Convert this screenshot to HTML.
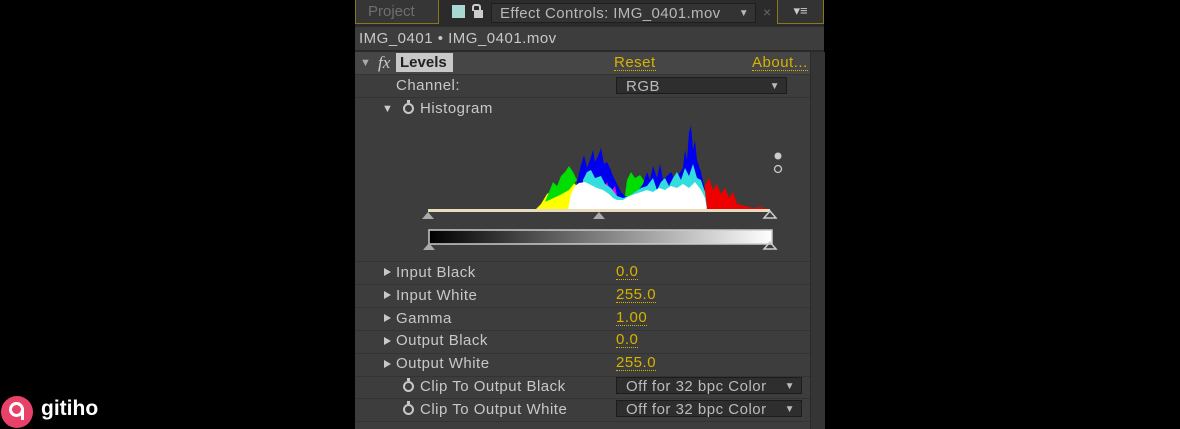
<!DOCTYPE html>
<html><head><style>
body{margin:0;width:1180px;height:429px;background:#000;position:relative;overflow:hidden;font-family:"Liberation Sans",sans-serif}
.p{position:absolute;left:355px;top:0;width:469px;height:429px;background:#3d3d3d}
.a{position:absolute;white-space:nowrap}
.t{color:#c8c8c8;font-size:15px;letter-spacing:.5px}
.y{color:#d8b200;font-size:15px;letter-spacing:.5px;border-bottom:1px dotted #d8b200;line-height:15px}
.row{position:absolute;left:0;width:455px;height:22px;border-bottom:1px solid #333}
.tri{position:absolute;width:0;height:0;border-top:4px solid transparent;border-bottom:4px solid transparent;border-left:7px solid #c8c8c8}
.dd{position:absolute;background:#2e2e2e;border:1px solid #1c1c1c;height:17px;color:#bbb;font-size:15px;letter-spacing:.5px;line-height:17px;padding-left:9px;box-sizing:border-box}
.sw{position:absolute;width:11px;height:11px;border:2px solid #c8c8c8;border-radius:50%;box-sizing:border-box}
.sw:before{content:"";position:absolute;left:2px;top:-5px;width:3px;height:3px;background:#c8c8c8}
</style></head><body>
<div class="p">
 <div class="a" style="left:0;top:0;width:469px;height:27px;background:#2b2b2b"></div>
 <div class="a" style="left:0;top:0;width:84px;height:24px;background:#363636;border:1px solid #8a7620;border-top:none;color:#6e6e6e;font-size:15px;line-height:24px;padding-left:12px;box-sizing:border-box">Project</div>
 <div class="a" style="left:97px;top:5px;width:13px;height:13px;background:#a8d8d2"></div>
 <div class="a" style="left:117px;top:4px;width:5px;height:5px;border:2px solid #ccc;border-bottom:none;border-radius:3px 3px 0 0"></div>
 <div class="a" style="left:119px;top:10px;width:9px;height:8px;background:#ccc"></div>
 <div class="a" style="left:136px;top:3px;width:265px;height:20px;background:#333;border:1px solid #1e1e1e;color:#b8b8b8;font-size:15px;letter-spacing:.4px;line-height:20px;padding-left:8px;box-sizing:border-box">Effect Controls: IMG_0401.mov<span style="position:absolute;right:6px;font-size:10px">▼</span></div>
 <div class="a" style="left:408px;top:4px;color:#666;font-size:14px">×</div>
 <div class="a" style="left:422px;top:0;width:47px;height:24px;background:#333;border:1px solid #8a7620;border-top:none;color:#ccc;font-size:13px;line-height:22px;text-align:center;box-sizing:border-box">▾≡</div>
 <div class="a t" style="left:4px;top:30px">IMG_0401 • IMG_0401.mov</div>
 <div class="a" style="left:0;top:50px;width:469px;height:2px;background:#2a2a2a"></div>
 <div class="a" style="left:455px;top:52px;width:14px;height:377px;background:#353535;border-left:1px solid #2a2a2a"></div>
 <div class="row" style="top:52px;background:#464646"></div>
 <div class="a" style="left:5px;top:57px;color:#aaa;font-size:11px">▼</div>
 <div class="a" style="left:23px;top:53px;color:#ccc;font-style:italic;font-family:'Liberation Serif',serif;font-size:17px">fx</div>
 <div class="a" style="left:41px;top:53px;width:57px;height:19px;background:#c8c8c8;color:#222;font-weight:bold;font-size:15px;line-height:19px;padding-left:4px;box-sizing:border-box">Levels</div>
 <div class="a y" style="left:259px;top:55px">Reset</div>
 <div class="a y" style="left:397px;top:55px">About...</div>
 <div class="row" style="top:75px"></div>
 <div class="a t" style="left:41px;top:77px">Channel:</div>
 <div class="dd" style="left:261px;top:77px;width:171px">RGB<span style="position:absolute;right:6px;font-size:10px">▼</span></div>
 <div class="a" style="left:27px;top:103px;color:#ccc;font-size:11px">▼</div>
 <div class="sw" style="left:48px;top:103px"></div>
 <div class="a t" style="left:65px;top:100px">Histogram</div>
 <svg class="a" style="left:0;top:120px" width="455" height="145">
  <polygon fill="#ffff00" points="180,90 186,84 192,74 198,70 204,66 210,63 216,60 222,66 226,90"/>
  <polygon fill="#ffff00" points="350,90 352,78 360,82 370,85 380,87 390,90"/>
  <polygon fill="#00dd00" points="190,82 194,72 198,62 202,66 206,56 210,52 214,46 218,52 222,60 214,70 205,75"/>
  <polygon fill="#00dd00" points="268,90 272,60 276,52 280,58 285,55 290,62 292,90"/>
  <polygon fill="#ee0000" points="346,90 350,65 354,58 358,70 362,64 366,74 370,68 374,78 378,72 382,84 390,86 398,88 405,87 413,89 413,90"/>
  <polygon fill="#0000ee" points="222,62 226,45 229,35 232,48 235,40 238,30 240,42 243,36 246,28 249,44 252,42 255,48 258,56 262,64 266,72 270,76 276,78 282,72 288,64 292,52 295,60 298,46 302,58 305,44 308,60 312,56 316,52 320,60 324,54 328,48 330,30 332,40 334,12 336,6 338,30 340,20 342,40 346,52 350,70 300,88 222,88"/>
  <polygon fill="#ee00ee" points="248,70 252,62 256,72 260,66 262,76"/>
  <polygon fill="#33dddd" points="228,60 232,52 236,50 240,58 246,56 250,64 256,68 262,76 268,78 274,76 280,72 286,68 292,66 298,58 302,70 306,62 310,58 314,66 318,58 322,52 326,60 330,48 334,56 338,44 342,58 346,60 350,72 352,88 228,88"/>
  <polygon fill="#ffffff" points="213,90 216,74 220,66 224,63 230,62 236,65 242,68 248,70 254,74 258,78 262,80 268,80 274,76 280,74 286,72 292,70 298,72 304,68 310,70 316,66 322,68 328,64 334,68 340,62 346,70 350,78 352,90"/>
  <rect x="73" y="89" width="342" height="3" fill="#e8dcc0"/>
  <polygon fill="#aaa" points="67,99 73,92 79,99"/>
  <polygon fill="#aaa" points="238,99 244,92 250,99"/>
  <polygon fill="none" stroke="#ccc" stroke-width="1.5" points="409,98 415,91 421,98"/>
  <circle cx="423" cy="36" r="3.5" fill="#ccc"/>
  <circle cx="423" cy="49" r="3.5" fill="none" stroke="#ccc" stroke-width="1.3"/>
  <defs><linearGradient id="g"><stop offset="0" stop-color="#000"/><stop offset="1" stop-color="#fff"/></linearGradient></defs>
  <rect x="74" y="110" width="343" height="14" fill="url(#g)" stroke="#ccc" stroke-width="1.5"/>
  <polygon fill="#aaa" points="68,130 74,123 80,130"/>
  <polygon fill="none" stroke="#ccc" stroke-width="1.5" points="409,129 415,122 421,129"/>
 </svg>
 <div class="a" style="left:0;top:261px;width:455px;height:1px;background:#333"></div>
 <div class="row" style="top:262px"></div><div class="tri" style="left:29px;top:268px"></div><div class="a t" style="left:41px;top:264px">Input Black</div><div class="a y" style="left:261px;top:264px">0.0</div>
 <div class="row" style="top:285px"></div><div class="tri" style="left:29px;top:291px"></div><div class="a t" style="left:41px;top:287px">Input White</div><div class="a y" style="left:261px;top:287px">255.0</div>
 <div class="row" style="top:308px"></div><div class="tri" style="left:29px;top:314px"></div><div class="a t" style="left:41px;top:310px">Gamma</div><div class="a y" style="left:261px;top:310px">1.00</div>
 <div class="row" style="top:331px"></div><div class="tri" style="left:29px;top:337px"></div><div class="a t" style="left:41px;top:332px">Output Black</div><div class="a y" style="left:261px;top:332px">0.0</div>
 <div class="row" style="top:354px"></div><div class="tri" style="left:29px;top:360px"></div><div class="a t" style="left:41px;top:355px">Output White</div><div class="a y" style="left:261px;top:355px">255.0</div>
 <div class="row" style="top:376px"></div><div class="sw" style="left:48px;top:381px"></div><div class="a t" style="left:65px;top:378px">Clip To Output Black</div>
 <div class="dd" style="left:261px;top:377px;width:186px">Off for 32 bpc Color<span style="position:absolute;right:6px;font-size:10px">▼</span></div>
 <div class="row" style="top:399px"></div><div class="sw" style="left:48px;top:404px"></div><div class="a t" style="left:65px;top:401px">Clip To Output White</div>
 <div class="dd" style="left:261px;top:400px;width:186px">Off for 32 bpc Color<span style="position:absolute;right:6px;font-size:10px">▼</span></div>
</div>
<div class="a" style="left:1px;top:396px;width:32px;height:32px;border-radius:50%;background:#e8416a"></div>
<div class="a" style="left:9px;top:402px;width:15px;height:15px;border:3px solid #fff;border-radius:50%;box-sizing:border-box"></div>
<div class="a" style="left:21px;top:408px;width:3px;height:12px;background:#fff"></div>
<div class="a" style="left:41px;top:397px;color:#fff;font-size:21px;font-weight:bold">gitiho</div>
</body></html>
